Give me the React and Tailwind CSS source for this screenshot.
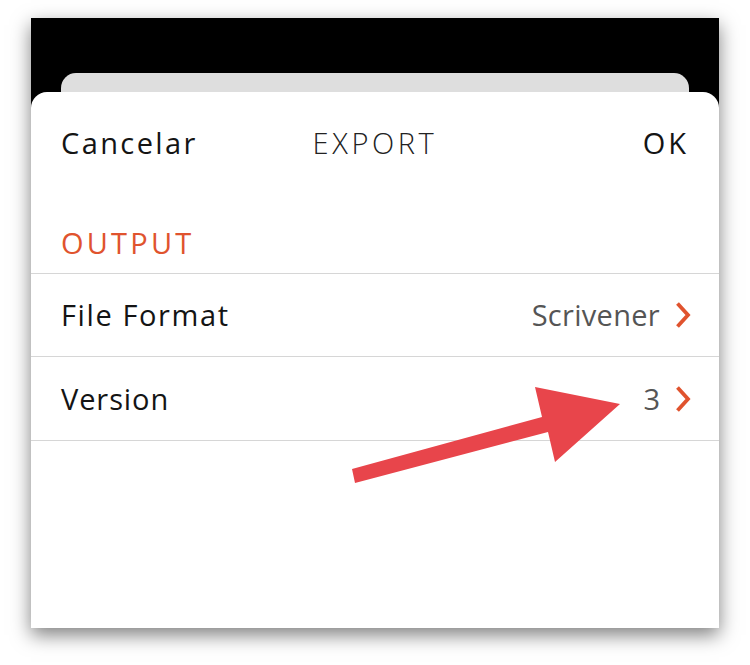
import React from "react";

function Chevron() {
  return (
    <svg width="16" height="26" viewBox="0 0 16 26" className="ml-[15px]">
      <path d="M2.5 1.5 L13 13 L2.5 24.5" fill="none" stroke="#e0532e" strokeWidth="3.8" />
    </svg>
  );
}

function Row({ label, value, top, labelTrack, valueTrack }) {
  return (
    <div
      className={`flex items-center justify-between h-[84px] pl-[30px] pr-[28px] border-b border-[#d6d6d6] ${
        top ? "border-t" : ""
      }`}
    >
      <span className={`text-[#141414] ${labelTrack}`}>{label}</span>
      <div className="flex items-center">
        <span className={`text-[#555555] ${valueTrack}`}>{value}</span>
        <Chevron />
      </div>
    </div>
  );
}

export default function App() {
  return (
    <div
      className="w-[750px] h-[665px] bg-white pt-[18px] pl-[31px]"
      style={{ fontFamily: "'Open Sans', sans-serif" }}
    >
      <div className="relative w-[688px] h-[610px] bg-black flex flex-col shadow-[0_7px_18px_rgba(0,0,0,0.5)]">
        <div className="h-[55px]" />
        <div className="h-[19px] mx-[30px] rounded-t-[15px] bg-[#dedede]" />
        <div className="flex-1 bg-white rounded-t-[16px] text-[29px]">
          <div className="grid grid-cols-3 items-center h-[102px] px-[30px]">
            <span className="text-[#141414] tracking-[2.4px]">Cancelar</span>
            <span className="text-center text-[#222222] font-light tracking-[3.6px]">EXPORT</span>
            <span className="text-right text-[#141414] tracking-[3px]">OK</span>
          </div>
          <div className="h-[79px] flex items-end pb-[9px] px-[30px]">
            <span className="text-[#e0532e] tracking-[3.2px]">OUTPUT</span>
          </div>
          <Row label="File Format" value="Scrivener" top labelTrack="tracking-[1.6px]" valueTrack="tracking-[0.3px]" />
          <Row label="Version" value="3" labelTrack="tracking-[0.9px]" valueTrack="tracking-[0px]" />
        </div>
        <svg
          className="absolute left-0 top-0 pointer-events-none"
          width="688"
          height="610"
          viewBox="0 0 688 610"
        >
          <polygon
            points="321,451 511,399 504,369 589,386 524,444 517,414 324,465"
            fill="#e8454b"
          />
        </svg>
      </div>
    </div>
  );
}
